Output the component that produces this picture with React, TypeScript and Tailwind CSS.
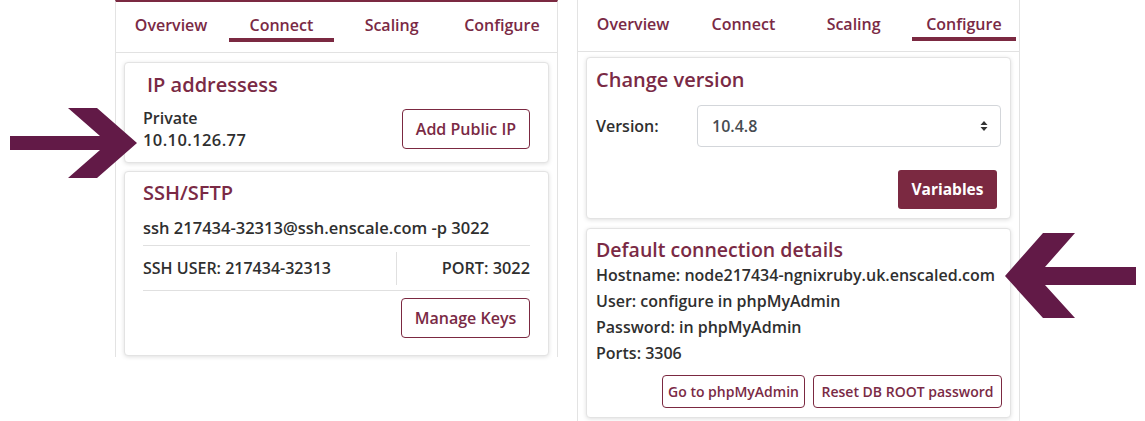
import React from "react";

const tabs = ["Overview", "Connect", "Scaling", "Configure"];

function Tabs({ active, top }: { active: number; top: "left" | "right" }) {
  return (
    <div
      className={
        "grid grid-cols-4 border-b border-[#e2e2e2] " +
        (top === "left" ? "h-[51px]" : "h-[52px]")
      }
    >
      {tabs.map((t, i) => (
        <div
          key={t}
          className={"flex flex-col " + (top === "left" ? "pt-[12px]" : "pt-[13px]")}
        >
          <div className="text-center text-[16px] leading-[22px] font-semibold text-[#7a2a45]">
            {t}
          </div>
          {i === active && <div className="mx-[3px] mt-[2px] h-[4px] bg-[#7b2941]" />}
        </div>
      ))}
    </div>
  );
}

const card =
  "rounded-[4px] border border-[#e3e3e3] bg-white shadow-[0_1px_4px_rgba(0,0,0,0.13)]";
const outlineBtn =
  "flex items-center justify-center rounded-[4px] border border-[#7b2941] bg-white font-semibold text-[#7a2a45]";

export default function App() {
  return (
    <div className="relative h-[421px] w-[1145px] overflow-hidden bg-white font-['Open_Sans',sans-serif] text-[#2f2f2f]">
      <div className="flex items-start gap-[19px] pl-[115px]">
        {/* Left panel */}
        <div className="h-[357px] w-[443px] border-x border-t-2 border-x-[#e3e3e3] border-t-[#7b2941]">
          <Tabs active={1} top="left" />
          <div className="px-2 pt-[9px]">
            <div className={card + " px-[18px] pb-[12px] pt-[8px]"}>
              <div className="pl-[4px] text-[20px] leading-[28px] font-semibold text-[#7a2a45]">
                IP addressess
              </div>
              <div className="mt-[9px] flex items-center justify-between">
                <div className="text-[16px] leading-[21px] font-semibold">
                  <div>Private</div>
                  <div className="text-[16.5px] tracking-[0.4px]">10.10.126.77</div>
                </div>
                <button className={outlineBtn + " h-[40px] w-[128px] text-[16px]"}>
                  Add Public IP
                </button>
              </div>
            </div>

            <div className={card + " mt-[8px] px-[18px] pb-[17px] pt-[7px]"}>
              <div className="text-[20px] leading-[28px] font-semibold text-[#7a2a45]">
                SSH/SFTP
              </div>
              <div className="mt-[9px] border-b border-[#e0e0e0] pb-[5px] text-[16.5px] leading-[24px] font-semibold">
                ssh 217434-32313@ssh.enscale.com -p 3022
              </div>
              <div className="flex h-[45px] items-center border-b border-[#e0e0e0] text-[16px] font-semibold">
                <div className="flex h-[33px] w-[254px] items-center border-r border-[#e0e0e0]">
                  SSH USER: 217434-32313
                </div>
                <div className="flex-1 text-right text-[16.3px]">PORT: 3022</div>
              </div>
              <div className="mt-[7px] flex justify-end">
                <button className={outlineBtn + " h-[40px] w-[129px] text-[16px]"}>
                  Manage Keys
                </button>
              </div>
            </div>
          </div>
        </div>

        {/* Right panel */}
        <div className="h-[421px] w-[443px] border-x border-[#e3e3e3]">
          <Tabs active={3} top="right" />
          <div className="px-2 pt-[5px]">
            <div className={card + " pb-[9px] pl-[9px] pr-[9px] pt-[8px]"}>
              <div className="text-[20px] leading-[28px] font-semibold text-[#7a2a45]">
                Change version
              </div>
              <div className="mt-[11px] flex items-center">
                <div className="w-[101px] text-[16px] font-semibold">Version:</div>
                <div className="flex h-[42px] flex-1 items-center justify-between rounded-[4px] border border-[#d3d6da] pl-[14px] pr-[12px] text-[16px] font-semibold text-[#474c51]">
                  <span>10.4.8</span>
                  <svg width="8" height="12" viewBox="0 0 8 12">
                    <path d="M4 1 L7.5 5 L0.5 5 Z" fill="#333" />
                    <path d="M4 11 L7.5 7 L0.5 7 Z" fill="#333" />
                  </svg>
                </div>
              </div>
              <div className="mt-[23px] flex justify-end pr-[4px]">
                <button className="flex h-[39px] w-[99px] items-center justify-center rounded-[3px] bg-[#7b2941] text-[15.5px] font-bold text-white">
                  Variables
                </button>
              </div>
            </div>

            <div className={card + " mt-[9px] pb-[9px] pl-[9px] pr-[8px] pt-[9px]"}>
              <div className="text-[19.5px] leading-[24px] font-semibold text-[#7a2a45]">
                Default connection details
              </div>
              <div className="text-[16px] leading-[26px] font-semibold">
                <div>Hostname: node217434-ngnixruby.uk.enscaled.com</div>
                <div>User: configure in phpMyAdmin</div>
                <div>Password: in phpMyAdmin</div>
                <div>Ports: 3306</div>
              </div>
              <div className="mt-[9px] flex justify-end gap-[8px]">
                <button className={outlineBtn + " h-[33px] w-[143px] text-[14px]"}>
                  Go to phpMyAdmin
                </button>
                <button className={outlineBtn + " h-[33px] w-[189px] text-[14px]"}>
                  Reset DB ROOT password
                </button>
              </div>
            </div>
          </div>
        </div>
      </div>

      {/* Annotation arrows */}
      <svg
        className="pointer-events-none absolute left-0 top-0"
        width="1145"
        height="421"
        viewBox="0 0 1145 421"
      >
        <polygon
          points="10,136 100,136 68,108 97,108 137,143 97,178 68,178 100,150 10,150"
          fill="#621a47"
        />
        <polygon
          points="1005,276 1043,233 1075,233 1045,267 1136,267 1136,285 1045,285 1075,318 1043,318"
          fill="#621a47"
        />
      </svg>
    </div>
  );
}
